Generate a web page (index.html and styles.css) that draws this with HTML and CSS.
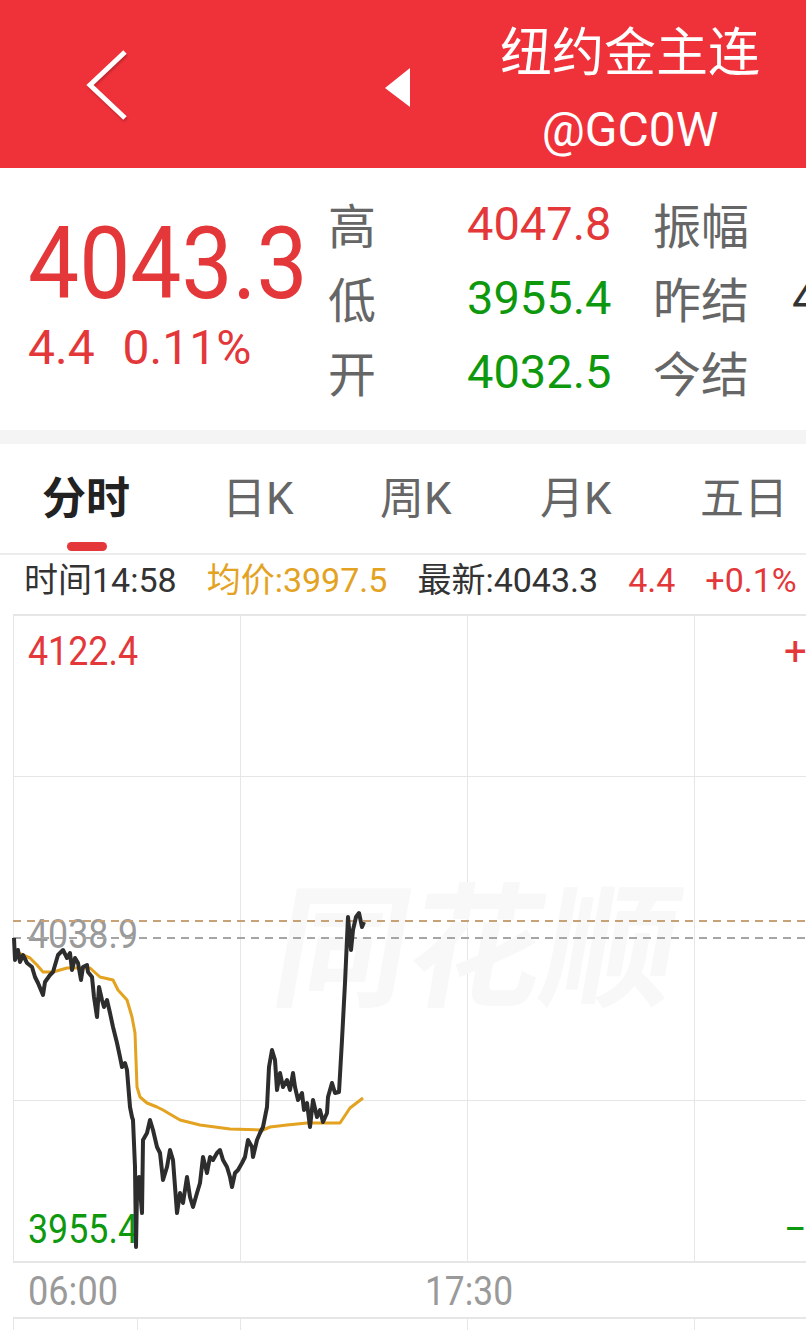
FILE: index.html
```html
<!DOCTYPE html>
<html lang="zh-CN">
<head>
<meta charset="utf-8">
<title>纽约金主连</title>
<link rel="stylesheet" href="styles.css">
</head>
<body>
<div class="titlebar">
    <a class="back" href="#">
        <svg width="48" height="76" viewBox="0 0 48 76"><polyline points="41,6 6,39 41,72" fill="none" stroke="#fff" stroke-width="5"/></svg>
    </a>
    <span class="prev">
        <svg width="34" height="48" viewBox="0 0 34 48"><polygon points="5,24 30,4 30,43" fill="#fff"/></svg>
    </span>
    <div class="name">
        <div class="name-cn">纽约金主连</div>
        <div class="name-code">@GC0W</div>
    </div>
</div>

<div class="quote">
    <div class="quote-main">
        <div class="last up">4043.3</div>
        <div class="change up"><span>4.4</span><span>0.11%</span></div>
    </div>
    <div class="quote-table">
        <span class="lbl">高</span><span class="val up">4047.8</span><span class="lbl">振幅</span><span class="val"></span>
        <span class="lbl">低</span><span class="val down">3955.4</span><span class="lbl">昨结</span><span class="val">4038.9</span>
        <span class="lbl">开</span><span class="val down">4032.5</span><span class="lbl">今结</span><span class="val"></span>
    </div>
</div>

<div class="divider"></div>

<ul class="tabs">
    <li class="tab active">分时</li>
    <li class="tab">日K</li>
    <li class="tab">周K</li>
    <li class="tab">月K</li>
    <li class="tab">五日</li>
</ul>

<div class="infobar">
    <span>时间14:58</span>
    <span class="avg">均价:3997.5</span>
    <span>最新:4043.3</span>
    <span class="up">4.4</span>
    <span class="up">+0.1%</span>
</div>

<svg class="chart" width="806" height="716" viewBox="0 614 806 716">
    <!-- grid -->
    <g class="grid">
        <line x1="13" y1="615" x2="806" y2="615" class="thick"/>
        <line x1="13" y1="776.5" x2="806" y2="776.5"/>
        <line x1="13" y1="1100.5" x2="806" y2="1100.5"/>
        <line x1="13" y1="1262" x2="806" y2="1262" class="thick"/>
        <line x1="13" y1="1318" x2="806" y2="1318" class="thick"/>
        <line x1="13.5" y1="614" x2="13.5" y2="1262"/>
        <line x1="240.5" y1="614" x2="240.5" y2="1262"/>
        <line x1="467.5" y1="614" x2="467.5" y2="1262"/>
        <line x1="694.5" y1="614" x2="694.5" y2="1262"/>
        <line x1="13.5" y1="1318" x2="13.5" y2="1330"/>
        <line x1="137.5" y1="1318" x2="137.5" y2="1330"/>
        <line x1="240.5" y1="1318" x2="240.5" y2="1330"/>
        <line x1="467.5" y1="1318" x2="467.5" y2="1330"/>
        <line x1="694.5" y1="1318" x2="694.5" y2="1330"/>
    </g>

    <text class="watermark" transform="translate(268,996) skewX(-10)">同花顺</text>

    <!-- price axis -->
    <text class="axis up" x="28" y="665" textLength="110" lengthAdjust="spacingAndGlyphs">4122.4</text>
    <text class="axis flat" x="28" y="948" textLength="110" lengthAdjust="spacingAndGlyphs">4038.9</text>
    <text class="axis down" x="28" y="1243" textLength="110" lengthAdjust="spacingAndGlyphs">3955.4</text>
    <text class="axis up" x="784" y="665">+2.07%</text>
    <text class="axis down" x="784" y="1243">−2.07%</text>

    <line class="dash-last" x1="13" y1="921" x2="806" y2="921"/>
    <line class="dash-pre" x1="13" y1="938" x2="806" y2="938"/>

    <path class="avg-line" d="M16,952 L30,958 L37,965 L43,972 L53,972 L67,968 L90,968 L100,977 L113,980 L118,990 L127,1000 L132,1017 L135,1033 L137,1087 L140,1097 L147,1103 L157,1107 L163,1110 L180,1120 L200,1125 L230,1129 L263,1130 L270,1127 L287,1125 L307,1123 L340,1123 L350,1108 L363,1098"/>
    <path class="price-line" d="M14,938 L15,960 L18,950 L20,962 L23,955 L27,963 L32,967 L35,977 L38,983 L43,995 L45,982 L50,975 L53,972 L58,955 L63,950 L67,958 L70,953 L72,970 L75,958 L78,963 L81,980 L83,967 L87,965 L88,972 L92,977 L94,997 L97,1017 L99,987 L102,1000 L104,1007 L107,1000 L110,1013 L113,1027 L117,1043 L120,1057 L122,1067 L125,1063 L127,1070 L130,1107 L132,1117 L133,1120 L135,1167 L136,1247 L137,1193 L139,1177 L142,1213 L143,1140 L147,1133 L150,1120 L153,1130 L157,1147 L160,1153 L163,1180 L167,1167 L170,1150 L173,1160 L177,1213 L180,1193 L183,1203 L187,1177 L190,1197 L193,1207 L197,1193 L200,1183 L203,1157 L207,1173 L210,1157 L213,1160 L217,1153 L220,1150 L223,1160 L227,1167 L230,1177 L232,1187 L235,1173 L238,1170 L242,1163 L245,1157 L248,1140 L252,1147 L253,1157 L257,1140 L260,1133 L263,1127 L267,1107 L269,1067 L272,1050 L275,1060 L277,1090 L280,1073 L283,1087 L287,1080 L290,1090 L293,1073 L295,1087 L298,1100 L302,1093 L304,1110 L307,1103 L310,1127 L313,1100 L317,1117 L320,1110 L323,1122 L327,1113 L328,1097 L332,1083 L335,1093 L339,1092 L342,1040 L345,983 L348,917 L351,950 L353,930 L356,917 L359,913 L362,927 L364,922"/>

    <!-- time axis -->
    <text class="axis flat" x="28" y="1305" textLength="90" lengthAdjust="spacingAndGlyphs">06:00</text>
    <text class="axis flat" x="425" y="1305" textLength="88" lengthAdjust="spacingAndGlyphs">17:30</text>
</svg>
</body>
</html>
```

FILE: styles.css
```css
body {
    margin: 0;
    width: 806px;
    overflow: hidden;
    background-color: #fff;
    font-family: Roboto, "Noto Sans CJK SC", sans-serif;
    color: #333;
}
.up {
    color: #e3373a;
}
.down {
    color: #0e980e;
}

/* title bar */
.titlebar {
    display: flex;
    align-items: flex-start;
    height: 168px;
    padding-left: 84px;
    background-color: #ef313a;
    color: #fff;
}
.back {
    display: block;
    margin-top: 46px;
    filter: drop-shadow(1px 2px 1px rgba(0, 0, 0, 0.2));
}
.back svg, .prev svg {
    display: block;
}
.prev {
    margin: 64px 0 0 248px;
}
.name {
    width: 300px;
    margin: 0 26px 0 auto;
    padding-top: 24px;
    text-align: center;
}
.name-cn {
    font-size: 52px;
    line-height: 60px;
}
.name-code {
    margin-top: 18px;
    font-size: 48px;
    line-height: 56px;
}

/* quote block */
.quote {
    display: flex;
    height: 262px;
    padding-left: 28px;
}
.quote-main {
    width: 300px;
    padding-top: 46px;
}
.last {
    font-size: 100px;
    line-height: 100px;
    transform: scaleX(0.91);
    transform-origin: 0 0;
}
.change {
    display: flex;
    gap: 28px;
    margin-top: 10px;
    font-size: 48px;
    line-height: 48px;
}
.quote-table {
    display: grid;
    grid-template-columns: 139px 186px 139px auto;
    grid-auto-rows: 74px;
    align-items: center;
    padding-top: 18px;
    white-space: nowrap;
}
.lbl {
    font-size: 48px;
    color: #666;
}
.val {
    font-size: 47px;
}

.divider {
    height: 14px;
    background-color: #f4f4f4;
}

/* period tabs */
.tabs {
    display: grid;
    grid-template-columns: 180px 158px 160px 160px 1fr;
    height: 109px;
    margin: 0;
    padding: 0 0 0 42px;
    list-style: none;
    border-bottom: 2px solid #ececec;
}
.tab {
    padding-top: 33px;
    font-size: 44px;
    line-height: 44px;
    color: #666;
    white-space: nowrap;
}
.tab.active {
    font-weight: bold;
    color: #222;
}
.tab.active::after {
    content: "";
    display: block;
    width: 40px;
    height: 9px;
    margin: 21px 0 0 25px;
    border-radius: 5px;
    background-color: #e3373a;
}

/* crosshair info */
.infobar {
    display: flex;
    gap: 30px;
    height: 51px;
    padding: 8px 0 0 24px;
    font-size: 34px;
    line-height: 34px;
    white-space: nowrap;
}
.infobar .avg {
    color: #e3a21f;
}

/* time-share chart */
.chart {
    display: block;
}
.grid line {
    stroke: #e6e6e6;
    stroke-width: 1;
}
.grid line.thick {
    stroke-width: 2;
}
.watermark {
    font-size: 134px;
    font-weight: bold;
    fill: #f8f8f8;
}
.axis {
    font-family: Roboto, sans-serif;
    font-size: 40px;
}
.axis.up {
    fill: #e3373a;
}
.axis.down {
    fill: #0e980e;
}
.axis.flat {
    fill: #9a9a9a;
}
.dash-last {
    stroke: #c9a176;
    stroke-width: 2;
    stroke-dasharray: 8 6;
}
.dash-pre {
    stroke: #a5a5a5;
    stroke-width: 2;
    stroke-dasharray: 8 6;
}
.avg-line {
    fill: none;
    stroke: #e3a21f;
    stroke-width: 3;
    stroke-linejoin: round;
}
.price-line {
    fill: none;
    stroke: #2d2d2d;
    stroke-width: 4;
    stroke-linejoin: round;
}
```
